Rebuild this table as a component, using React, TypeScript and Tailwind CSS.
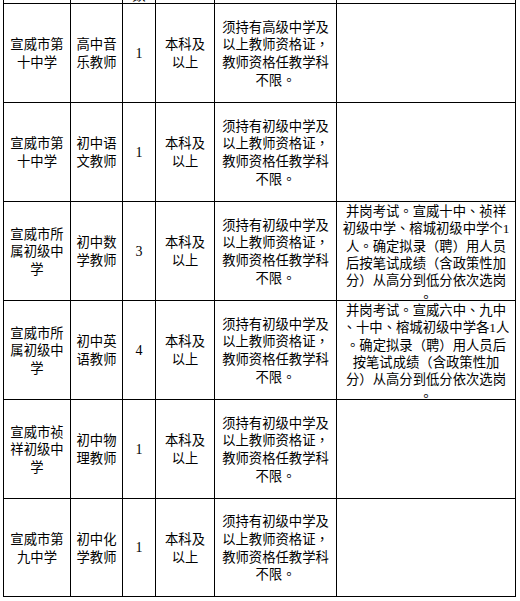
const rows = [
  {
    unit: ["宣威市第", "十中学"],
    post: ["高中音", "乐教师"],
    num: "1",
    edu: ["本科及", "以上"],
    req: ["须持有高级中学及", "以上教师资格证，", "教师资格任教学科", "不限。"],
    note: [] as string[],
  },
  {
    unit: ["宣威市第", "十中学"],
    post: ["初中语", "文教师"],
    num: "1",
    edu: ["本科及", "以上"],
    req: ["须持有初级中学及", "以上教师资格证，", "教师资格任教学科", "不限。"],
    note: [],
  },
  {
    unit: ["宣威市所", "属初级中", "学"],
    post: ["初中数", "学教师"],
    num: "3",
    edu: ["本科及", "以上"],
    req: ["须持有初级中学及", "以上教师资格证，", "教师资格任教学科", "不限。"],
    note: [
      "并岗考试。宣威十中、祯祥",
      "初级中学、榕城初级中学个1",
      "人。确定拟录（聘）用人员",
      "后按笔试成绩（含政策性加",
      "分）从高分到低分依次选岗",
      "。",
    ],
  },
  {
    unit: ["宣威市所", "属初级中", "学"],
    post: ["初中英", "语教师"],
    num: "4",
    edu: ["本科及", "以上"],
    req: ["须持有初级中学及", "以上教师资格证，", "教师资格任教学科", "不限。"],
    note: [
      "并岗考试。宣威六中、九中",
      "、十中、榕城初级中学各1人",
      "。确定拟录（聘）用人员后",
      "按笔试成绩（含政策性加",
      "分）从高分到低分依次选岗",
      "。",
    ],
  },
  {
    unit: ["宣威市祯", "祥初级中", "学"],
    post: ["初中物", "理教师"],
    num: "1",
    edu: ["本科及", "以上"],
    req: ["须持有初级中学及", "以上教师资格证，", "教师资格任教学科", "不限。"],
    note: [],
  },
  {
    unit: ["宣威市第", "九中学"],
    post: ["初中化", "学教师"],
    num: "1",
    edu: ["本科及", "以上"],
    req: ["须持有初级中学及", "以上教师资格证，", "教师资格任教学科", "不限。"],
    note: [],
  },
]

// punctuation centred like the source font, digits in a serif face
function Line({ text }: { text: string }) {
  const parts = text.split(/([。，、]|[0-9]+)/).filter(Boolean)
  return (
    <div className="whitespace-nowrap">
      {parts.map((p, i) =>
        /^[。，、]$/.test(p) ? (
          <span key={i} className="font-['Noto_Sans_CJK_TC',sans-serif]">
            {p}
          </span>
        ) : /^[0-9]+$/.test(p) ? (
          <span key={i} className="font-['Liberation_Serif',serif]">
            {p}
          </span>
        ) : (
          <span key={i}>{p}</span>
        )
      )}
    </div>
  )
}

function Cell({ lines }: { lines: string[] }) {
  return (
    <div className="flex flex-col items-center justify-center bg-white text-center leading-[17.6px]">
      {lines.map((l, i) => (
        <Line key={i} text={l} />
      ))}
    </div>
  )
}

export default function App() {
  return (
    <div className="h-[601px] w-[520px] overflow-hidden bg-white font-['Noto_Sans_CJK_SC',sans-serif] text-[13.33px] text-black">
      <div className="-mt-[28px] ml-[3px] grid w-fit grid-cols-[66px_51px_32px_58px_121px_178px] grid-rows-[30px_98px_98px_98px_98px_98px_97px] gap-px bg-black p-px">
        {/* header row, only its lower edge is in view */}
        <div className="bg-white" />
        <div className="bg-white" />
        <div className="flex items-end justify-center bg-white leading-[17.5px]">数</div>
        <div className="bg-white" />
        <div className="bg-white" />
        <div className="bg-white" />

        {rows.map((r, i) => (
          <div key={i} className="contents">
            <Cell lines={r.unit} />
            <Cell lines={r.post} />
            <div className="flex items-center justify-center bg-white font-['Liberation_Serif',serif] text-[14px]">
              {r.num}
            </div>
            <Cell lines={r.edu} />
            <Cell lines={r.req} />
            <div className="flex flex-col items-center bg-white text-center leading-[17px]">
              {r.note.map((l, j) => (
                <Line key={j} text={l} />
              ))}
            </div>
          </div>
        ))}
      </div>
    </div>
  )
}
